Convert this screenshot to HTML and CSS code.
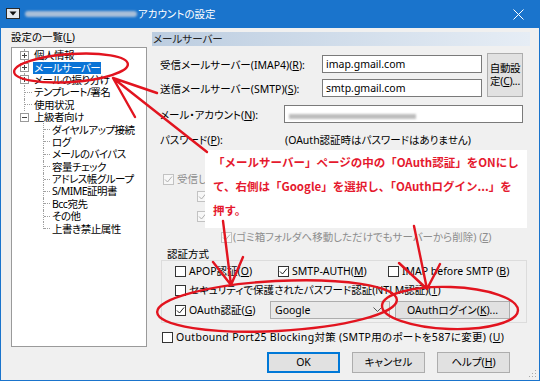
FILE: index.html
```html
<!DOCTYPE html>
<html lang="ja">
<head>
    <meta charset="UTF-8">
    <title>アカウントの設定</title>
    <link rel="stylesheet" href="styles.css">
</head>
<body>
<div class="shot">
    <div class="window">
        <div class="titlebar">
            <svg class="sysicon" width="14" height="11" viewBox="0 0 14 11"><rect x="0.5" y="0.5" width="13" height="10" fill="#e4e9ef" stroke="#2a2a2a"/><path d="M3.5 3.5 H10.5 L7 7.5 Z" fill="#111"/></svg>
            <span class="mail-blur"></span>
            <span class="title">アカウントの設定</span>
            <svg class="close" width="11" height="11" viewBox="0 0 11 11"><path d="M0.5 0.5 L10.5 10.5 M10.5 0.5 L0.5 10.5" stroke="#fff" stroke-width="1"/></svg>
        </div>

        <div class="client">
            <!-- 左側: 設定の一覧 -->
            <div class="sidebar">
                <div class="list-label">設定の一覧(<u>L</u>)</div>
                <ul class="tree">
                    <li class="top"><span class="gut"><svg class="exp" width="9" height="9" viewBox="0 0 9 9"><rect x="0.5" y="0.5" width="8" height="8" fill="#fff" stroke="#9a9a9a"/><path d="M2 4.5H7M4.5 2V7" stroke="#444"/></svg></span><span class="txt">個人情報</span></li>
                    <li class="top"><span class="gut"><svg class="exp" width="9" height="9" viewBox="0 0 9 9"><rect x="0.5" y="0.5" width="8" height="8" fill="#fff" stroke="#9a9a9a"/><path d="M2 4.5H7M4.5 2V7" stroke="#444"/></svg></span><span class="txt sel">メールサーバー</span></li>
                    <li class="top"><span class="gut"><svg class="exp" width="9" height="9" viewBox="0 0 9 9"><rect x="0.5" y="0.5" width="8" height="8" fill="#fff" stroke="#9a9a9a"/><path d="M2 4.5H7M4.5 2V7" stroke="#444"/></svg></span><span class="txt">メールの振り分け</span></li>
                    <li class="top"><span class="gut"><i class="h"></i></span><span class="txt">テンプレート/署名</span></li>
                    <li class="top"><span class="gut"><i class="h"></i></span><span class="txt">使用状況</span></li>
                    <li class="top last"><span class="gut"><svg class="exp" width="9" height="9" viewBox="0 0 9 9"><rect x="0.5" y="0.5" width="8" height="8" fill="#fff" stroke="#9a9a9a"/><path d="M2 4.5H7" stroke="#444"/></svg></span><span class="txt">上級者向け</span></li>
                    <li class="sub"><span class="gut"><i class="h"></i></span><span class="txt">ダイヤルアップ接続</span></li>
                    <li class="sub"><span class="gut"><i class="h"></i></span><span class="txt">ログ</span></li>
                    <li class="sub"><span class="gut"><i class="h"></i></span><span class="txt">メールのバイパス</span></li>
                    <li class="sub"><span class="gut"><i class="h"></i></span><span class="txt">容量チェック</span></li>
                    <li class="sub"><span class="gut"><i class="h"></i></span><span class="txt">アドレス帳グループ</span></li>
                    <li class="sub"><span class="gut"><i class="h"></i></span><span class="txt">S/MIME証明書</span></li>
                    <li class="sub"><span class="gut"><i class="h"></i></span><span class="txt">Bcc宛先</span></li>
                    <li class="sub"><span class="gut"><i class="h"></i></span><span class="txt">その他</span></li>
                    <li class="sub last"><span class="gut"><i class="h"></i></span><span class="txt">上書き禁止属性</span></li>
                </ul>
            </div>

            <!-- 右側: メールサーバー -->
            <div class="panel">
                <div class="panel-head">メールサーバー</div>
                <div class="panel-body">
                    <div class="servers">
                        <div class="server-rows">
                            <div class="row">
                                <span class="lbl lbl-server">受信メールサーバー(IMAP4)(<u>R</u>):</span>
                                <span class="input input-server">imap.gmail.com</span>
                            </div>
                            <div class="row">
                                <span class="lbl lbl-server">送信メールサーバー(SMTP)(<u>S</u>):</span>
                                <span class="input input-server">smtp.gmail.com</span>
                            </div>
                        </div>
                        <button class="btn btn-auto"><span class="auto-line">自動設</span><span class="auto-line">定(<u>C</u>)...</span></button>
                    </div>

                    <div class="row row-account">
                        <span class="lbl lbl-account">メール・アカウント(<u>N</u>):</span>
                        <span class="input input-account"><span class="text-blur"></span></span>
                    </div>

                    <div class="row row-password">
                        <span class="lbl lbl-password">パスワード(<u>P</u>):</span>
                        <span class="note">(OAuth認証時はパスワードはありません)</span>
                    </div>

                    <!-- 書き込みの下に隠れている部分 -->
                    <div class="disabled">
                        <div class="check c1"><span class="cb on"><svg width="9" height="9" viewBox="0 0 9 9"><path d="M1 4.5 L3.5 7 L8 1.5" fill="none" stroke="#b0b0b0"/></svg></span>受信し</div>
                        <div class="check c2"><span class="cb on"><svg width="9" height="9" viewBox="0 0 9 9"><path d="M1 4.5 L3.5 7 L8 1.5" fill="none" stroke="#b0b0b0"/></svg></span></div>
                        <div class="check c3"><span class="cb on"><svg width="9" height="9" viewBox="0 0 9 9"><path d="M1 4.5 L3.5 7 L8 1.5" fill="none" stroke="#b0b0b0"/></svg></span></div>
                        <div class="check c4"><span class="cb on"><svg width="9" height="9" viewBox="0 0 9 9"><path d="M1 4.5 L3.5 7 L8 1.5" fill="none" stroke="#b0b0b0"/></svg></span>(ゴミ箱フォルダへ移動しただけでもサーバーから削除) (<u>Z</u>)</div>
                    </div>

                    <div class="auth-title">認証方式</div>
                    <div class="auth-box">
                        <div class="auth-row">
                            <div class="check col1"><span class="cb"></span>APOP認証(<u>O</u>)</div>
                            <div class="check col2"><span class="cb"><svg width="9" height="9" viewBox="0 0 9 9"><path d="M1 4.5 L3.5 7 L8 1.5" fill="none" stroke="#222"/></svg></span>SMTP-AUTH(<u>M</u>)</div>
                            <div class="check"><span class="cb"></span>IMAP before SMTP (<u>B</u>)</div>
                        </div>
                        <div class="auth-row r2">
                            <div class="check"><span class="cb"></span>セキュリティで保護されたパスワード認証(NTLM認証)(<u>T</u>)</div>
                        </div>
                        <div class="auth-row r3">
                            <div class="check col-oauth"><span class="cb"><svg width="9" height="9" viewBox="0 0 9 9"><path d="M1 4.5 L3.5 7 L8 1.5" fill="none" stroke="#222"/></svg></span>OAuth認証(<u>G</u>)</div>
                            <div class="combo"><span>Google</span><svg width="9" height="6" viewBox="0 0 9 6"><path d="M0.5 0.5 L4.5 4.5 L8.5 0.5" fill="none" stroke="#555"/></svg></div>
                            <button class="btn btn-oauth">OAuthログイン(<u>K</u>)...</button>
                        </div>
                    </div>

                    <div class="check outbound"><span class="cb"></span>Outbound Port25 Blocking対策 (SMTP用のポートを587に変更) (<u>U</u>)</div>

                    <div class="buttons">
                        <button class="btn btn-ok">OK</button>
                        <button class="btn">キャンセル</button>
                        <button class="btn">ヘルプ(<u>H</u>)</button>
                    </div>
                </div>
            </div>
        </div>
        <svg class="grip" width="8" height="8" viewBox="0 0 8 8" fill="#a8a8a8"><rect x="6" y="0" width="1" height="1"/><rect x="3" y="3" width="1" height="1"/><rect x="6" y="3" width="1" height="1"/><rect x="0" y="6" width="1" height="1"/><rect x="3" y="6" width="1" height="1"/><rect x="6" y="6" width="1" height="1"/></svg>
    </div>

    <!-- 説明の書き込み -->
    <div class="callout">「メールサーバー」ページの中の「OAuth認証」をONにし<br>て、右側は「Google」を選択し、「OAuthログイン...」を<br>押す。</div>

    <svg class="marks" width="540" height="381" viewBox="0 0 540 381">
        <g fill="none" stroke="#e2141f" stroke-width="2.4" stroke-linecap="round" stroke-linejoin="round">
            <ellipse cx="71" cy="68" rx="57" ry="14" transform="rotate(-4 71 68)"/>
            <path d="M207 152 L113 78 M157 93 L113 78 L135 117"/>
            <path d="M223 221 L231 285 M213 262 L231 285 L243 257"/>
            <path d="M414 226 L427 289 M399 263 L427 289 L440 264"/>
            <ellipse cx="277" cy="306" rx="120" ry="25" transform="rotate(-3 277 306)"/>
            <ellipse cx="450" cy="308" rx="68" ry="21" transform="rotate(2 450 308)"/>
        </g>
    </svg>
</div>
</body>
</html>
```

FILE: styles.css
```css
* {
    box-sizing: border-box;
}

body {
    margin: 0;
    background: #fff;
    font-family: "Noto Sans", "Noto Sans CJK JP", sans-serif;
    font-size: 10.5px;
    color: #000;
    font-feature-settings: "palt";
}

u {
    text-decoration-thickness: 1px;
    text-underline-offset: 1px;
}

.shot {
    position: relative;
    width: 540px;
    height: 381px;
    overflow: hidden;
}

.window {
    position: relative;
    width: 540px;
    height: 381px;
    background: #f0f0f0;
    border: 1px solid #1a74cc;
    border-top: 0;
}

/* タイトルバー */
.titlebar {
    height: 28px;
    background: #1a74cc;
    display: flex;
    align-items: center;
    padding: 0 15px 0 5px;
    color: #fff;
}

.sysicon {
    flex: none;
    margin-top: -2px;
}

.mail-blur {
    width: 112px;
    height: 6px;
    margin-left: 5px;
    border-radius: 3px;
    background: #a9bfd8;
    filter: blur(1.2px);
}

.title {
    margin-left: 1px;
    line-height: 14px;
}

.close {
    margin-left: auto;
    flex: none;
}

.client {
    display: flex;
    height: 352px;
}

/* 設定の一覧 */
.sidebar {
    width: 146px;
    padding-left: 10px;
    flex: none;
}

.list-label {
    margin-top: 2px;
    line-height: 14px;
}

.tree {
    list-style: none;
    margin: 3px 0 0;
    padding: 1px 0 0;
    height: 300px;
    width: 136px;
    background: #fff;
    border: 1px solid #9a9a9a;
}

.tree li {
    display: flex;
    height: 12.4px;
}

.gut {
    display: flex;
    align-items: center;
    flex: none;
    border-left: 1px dotted #a0a0a0;
}

.top .gut {
    margin-left: 12px;
    width: 8px;
}

.top.last .gut {
    border-left-color: transparent;
}

.sub .gut {
    margin-left: 31px;
    width: 7px;
}

.sub.last .gut {
    height: 50%;
    align-items: flex-end;
}

.h {
    display: block;
    width: 100%;
    border-top: 1px dotted #a0a0a0;
}

.exp {
    margin-left: -5px;
    flex: none;
}

.txt {
    align-self: center;
    margin-left: 1px;
    padding: 0 1px;
    line-height: 12px;
    letter-spacing: -0.5px;
    white-space: nowrap;
}

.txt.sel {
    background: #0a74d6;
    color: #fff;
}

/* 右側のパネル */
.panel {
    width: 378px;
    margin-left: 5px;
    padding-top: 4px;
}

.panel-head {
    height: 14px;
    line-height: 14px;
    padding-left: 1px;
    color: #222;
    background: linear-gradient(to right, #bccde0, #e6edf5);
}

.panel-body {
    padding: 0 7px 0 8px;
}

.row {
    display: flex;
    align-items: center;
    height: 18px;
}

.lbl {
    flex: none;
    white-space: nowrap;
}

.lbl-server {
    width: 162px;
}

.lbl-account {
    width: 124px;
}

.lbl-password {
    width: 125px;
}

.input {
    height: 18px;
    line-height: 16px;
    padding-left: 3px;
    background: #fff;
    border: 1px solid #7a7a7a;
}

.input-server {
    width: 160px;
}

.input-account {
    flex: 1;
    display: flex;
    align-items: center;
}

.text-blur {
    width: 127px;
    height: 5px;
    margin-left: 1px;
    margin-top: 4px;
    background: #bdbdbd;
    filter: blur(1px);
}

.servers {
    display: flex;
    margin-top: 7px;
}

.server-rows {
    display: flex;
    flex-direction: column;
    gap: 6px;
    padding-top: 2px;
}

.btn {
    font-family: inherit;
    font-size: 10.5px;
    font-feature-settings: "palt";
    color: #000;
    background: #e1e1e1;
    border: 1px solid #adadad;
    padding: 0;
    line-height: 13px;
}

.btn-auto {
    width: 36px;
    height: 44px;
    margin-left: 5px;
    display: flex;
    flex-direction: column;
    align-items: center;
    justify-content: center;
}

.auto-line {
    display: block;
    height: 13px;
    line-height: 13px;
    letter-spacing: -0.3px;
    white-space: nowrap;
}

.row-account {
    margin-top: 8px;
}

.row-password {
    margin-top: 7px;
}

.note {
    white-space: nowrap;
}

/* チェックボックス */
.check {
    display: flex;
    align-items: center;
    height: 12px;
    white-space: nowrap;
    line-height: 12px;
}

.cb {
    flex: none;
    width: 11px;
    height: 11px;
    margin-right: 3px;
    background: #fff;
    border: 1px solid #333;
    display: flex;
    align-items: center;
    justify-content: center;
}

.disabled {
    color: #8d8d8d;
}

.disabled .cb {
    border-color: #c2c2c2;
    background: #f7f7f7;
}

.disabled .check {
    height: 14px;
}

.c1 {
    margin: 24px 0 0 3px;
}

.c2 {
    margin: 3px 0 0 37px;
}

.c3 {
    margin: 6px 0 0 37px;
}

.c4 {
    margin: 7px 0 0 61px;
}

.c4 .cb {
    margin-right: 1px;
}

/* 認証方式 */
.auth-title {
    margin: 3px 0 0 7px;
    line-height: 14px;
    height: 14px;
}

.auth-box {
    margin: -1px -4px 0 1px;
    padding: 4px 0 3px 13px;
    border: 1px solid #dcdcdc;
}

.auth-row {
    display: flex;
    align-items: center;
    height: 12px;
}

.auth-row.r2 {
    margin-top: 7px;
}

.auth-row.r3 {
    margin-top: 5px;
    height: 18px;
}

.col1 {
    width: 103px;
}

.col2 {
    width: 110px;
}

.col-oauth {
    width: 95px;
}

.combo {
    width: 120px;
    height: 18px;
    display: flex;
    align-items: center;
    justify-content: space-between;
    padding: 0 7px 0 4px;
    background: #e9e9e9;
    border: 1px solid #adadad;
}

.btn-oauth {
    width: 115px;
    height: 18px;
    margin-left: 5px;
}

.outbound {
    margin: 8px 0 0 2px;
    letter-spacing: 0.3px;
}

.buttons {
    display: flex;
    justify-content: flex-end;
    gap: 12px;
    margin-top: 9px;
    padding-right: 13px;
}

.buttons .btn {
    width: 73px;
    height: 21px;
}

.btn-ok {
    border: 1px solid #0078d7;
    box-shadow: inset 0 0 0 1px #0078d7;
}

.grip {
    position: absolute;
    right: 2px;
    bottom: 2px;
}

/* 赤い書き込み */
.callout {
    position: absolute;
    left: 205px;
    top: 150px;
    width: 322px;
    height: 78px;
    padding-left: 8px;
    background: #fff;
    color: #e5192e;
    font-family: "Noto Sans CJK JP", sans-serif;
    font-feature-settings: normal;
    font-weight: bold;
    font-size: 11.5px;
    line-height: 24px;
    white-space: nowrap;
}

.marks {
    position: absolute;
    left: 0;
    top: 0;
    pointer-events: none;
}
```
